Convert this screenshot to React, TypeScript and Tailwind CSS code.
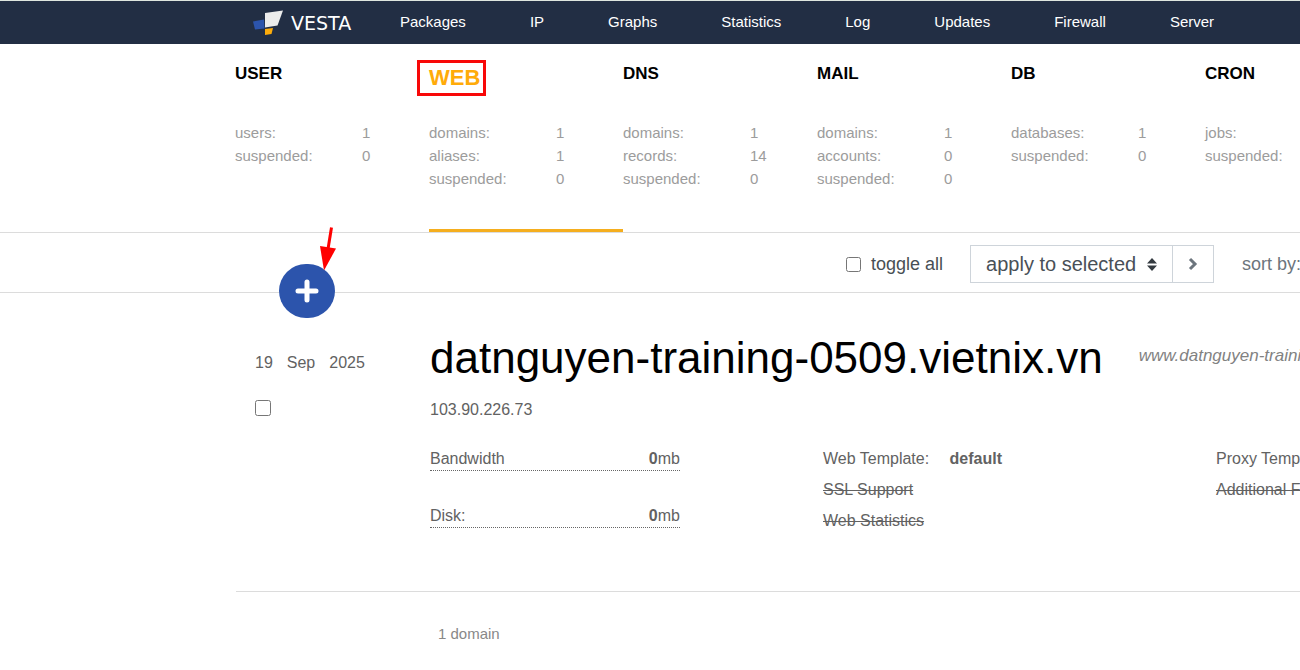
import type { ReactNode } from 'react';

const navItems = ['Packages', 'IP', 'Graphs', 'Statistics', 'Log', 'Updates', 'Firewall', 'Server'];

type Section = { name: string; active?: boolean; rows: [string, string][] };

const sections: Section[] = [
  { name: 'USER', rows: [['users:', '1'], ['suspended:', '0']] },
  { name: 'WEB', active: true, rows: [['domains:', '1'], ['aliases:', '1'], ['suspended:', '0']] },
  { name: 'DNS', rows: [['domains:', '1'], ['records:', '14'], ['suspended:', '0']] },
  { name: 'MAIL', rows: [['domains:', '1'], ['accounts:', '0'], ['suspended:', '0']] },
  { name: 'DB', rows: [['databases:', '1'], ['suspended:', '0']] },
  { name: 'CRON', rows: [['jobs:', '1'], ['suspended:', '0']] },
];

function Logo() {
  return (
    <a href="#home" className="flex w-[147px] shrink-0 items-center gap-2">
      <svg width="30" height="26" viewBox="0 0 30 26" aria-hidden="true">
        <path d="M0 11.5 11 9.5 11.5 18.5 2 19.5Z" fill="#2c54ac" />
        <path d="M12 3 30 .5 24.5 15.5 12 17.5Z" fill="#ececec" />
        <path d="M12 19 20 18 18.5 24 12 25Z" fill="#fdac0c" />
      </svg>
      <span className="font-['DejaVu_Sans',sans-serif] text-[19px] leading-5 text-white">VESTA</span>
    </a>
  );
}

function Header() {
  return (
    <header className="flex h-11 items-center border-t border-[#dfe6df] bg-[#222e44] pl-[253px]">
      <Logo />
      <nav className="flex gap-16 whitespace-nowrap text-[15px] text-white">
        {navItems.map((item) => (
          <a key={item} href={`#${item.toLowerCase()}`}>{item}</a>
        ))}
      </nav>
    </header>
  );
}

function SectionCard({ section }: { section: Section }) {
  return (
    <li className={`relative w-[194px] shrink-0 border-b-[3px] pt-4 pb-10 ${section.active ? 'border-[#f5ae1e]' : 'border-transparent'}`}>
      <h2 className="h-[61px] font-bold">
        {section.active ? (
          <a href="#web" className="block text-[22px] leading-9 text-[#ffab0a]">{section.name}</a>
        ) : (
          <a href={`#${section.name.toLowerCase()}`} className="block text-[17px] leading-7 text-black">{section.name}</a>
        )}
      </h2>
      {section.active && (
        <div className="pointer-events-none absolute top-4 -left-3 h-9 w-[69px] border-[3px] border-[#f80808]" />
      )}
      <dl className="text-[15px] leading-[23px] text-[#9c9c9c]">
        {section.rows.map(([label, value]) => (
          <div key={label} className="flex">
            <dt className="w-[127px]">{label}</dt>
            <dd>{value}</dd>
          </div>
        ))}
      </dl>
    </li>
  );
}

function Toolbar() {
  return (
    <div className="relative flex h-[61px] items-center border-y border-[#dcdcdc] pt-[3px] pl-[846px] whitespace-nowrap">
      <button
        type="button"
        aria-label="Add web domain"
        className="absolute top-[31px] left-[279px] flex h-[54px] w-14 items-center justify-center rounded-full bg-[#2c54ac]"
      >
        <svg width="24" height="24" viewBox="0 0 24 24" stroke="#fff" strokeWidth="5" strokeLinecap="round" aria-hidden="true">
          <path d="M12 3v18M3 12h18" />
        </svg>
      </button>
      <svg className="pointer-events-none absolute -top-[6px] left-[318px]" width="20" height="46" viewBox="0 0 20 46" aria-hidden="true">
        <path d="M13.5 .5 10 22" stroke="#f00" strokeWidth="3" />
        <path d="M2 19 18 21.500 6 43.500Z" fill="#f00" />
      </svg>
      <label className="flex shrink-0 items-center gap-[10px] text-[18px] text-[#484f55]">
        <input type="checkbox" className="size-[15px]" />
        toggle all
      </label>
      <form className="ml-[27px] flex h-[38px] shrink-0 border border-[#ced4da]">
        <div className="relative flex w-[201px]">
          <select
            aria-label="apply to selected"
            className="w-full appearance-none bg-transparent pl-[15px] text-[20px] leading-8 text-[#495057]"
          >
            <option>apply to selected</option>
          </select>
          <svg className="pointer-events-none absolute top-3 right-[15px]" width="10" height="13" viewBox="0 0 10 13" fill="#343a40" aria-hidden="true">
            <path d="M5 0 10 5.500H0ZM0 7.500H10L5 13Z" />
          </svg>
        </div>
        <button type="button" aria-label="Apply" className="flex w-[41px] items-center justify-center border-l border-[#ced4da]">
          <svg width="10" height="14" viewBox="0 0 10 14" fill="none" stroke="#6c757d" strokeWidth="3" aria-hidden="true">
            <path d="M2 2 7 7 2 12" />
          </svg>
        </button>
      </form>
      <span className="ml-7 shrink-0 text-[18px] text-[#6c757d]">sort by:</span>
    </div>
  );
}

function Usage({ label, value }: { label: string; value: string }) {
  return (
    <div className="flex justify-between border-b border-dotted border-[#666] leading-[22px]">
      <dt>{label}</dt>
      <dd><b>{value}</b>mb</dd>
    </div>
  );
}

function Column({ children }: { children: ReactNode }) {
  return <ul className="w-[393px] shrink-0 leading-[31px]">{children}</ul>;
}

function DomainRow() {
  return (
    <article className="ml-[236px] flex border-b border-[#dcdcdc] pt-9 pb-[55px] text-[16px] whitespace-nowrap text-[#626262]">
      <div className="w-[194px] shrink-0 pt-[22px] pl-[19px]">
        <time dateTime="2025-09-19" className="flex gap-[14px] leading-6">
          <span>19</span><span>Sep</span><span>2025</span>
        </time>
        <input type="checkbox" aria-label="Select domain" className="mt-[25px] block size-4" />
      </div>
      <div className="shrink-0">
        <div className="flex items-center gap-9">
          <h1 className="text-[44px] leading-[58px] text-black">datnguyen-training-0509.vietnix.vn</h1>
          <span className="pb-1 text-[17px] text-[#828282] italic">www.datnguyen-training-0509.vietnix.vn</span>
        </div>
        <p className="mt-[11px] leading-6">103.90.226.73</p>
        <div className="mt-[21px] flex">
          <dl className="mr-[143px] w-[250px] space-y-[34px] pt-[5px]">
            <Usage label="Bandwidth" value="0" />
            <Usage label="Disk:" value="0" />
          </dl>
          <Column>
            <li>Web Template: <b className="ml-4">default</b></li>
            <li className="line-through">SSL Support</li>
            <li className="line-through">Web Statistics</li>
          </Column>
          <Column>
            <li>Proxy Template: <b className="ml-4">default</b></li>
            <li className="line-through">Additional FTP Account</li>
          </Column>
        </div>
      </div>
    </article>
  );
}

export default function App() {
  return (
    <div className="overflow-x-hidden bg-white font-['Liberation_Sans',Arial,sans-serif]">
      <Header />
      <ul className="flex h-[188px] pl-[235px]">
        {sections.map((section) => (
          <SectionCard key={section.name} section={section} />
        ))}
      </ul>
      <main>
        <Toolbar />
        <DomainRow />
        <p className="py-8 pl-[438px] text-[15px] leading-5 text-[#888]">1 domain</p>
      </main>
    </div>
  );
}
